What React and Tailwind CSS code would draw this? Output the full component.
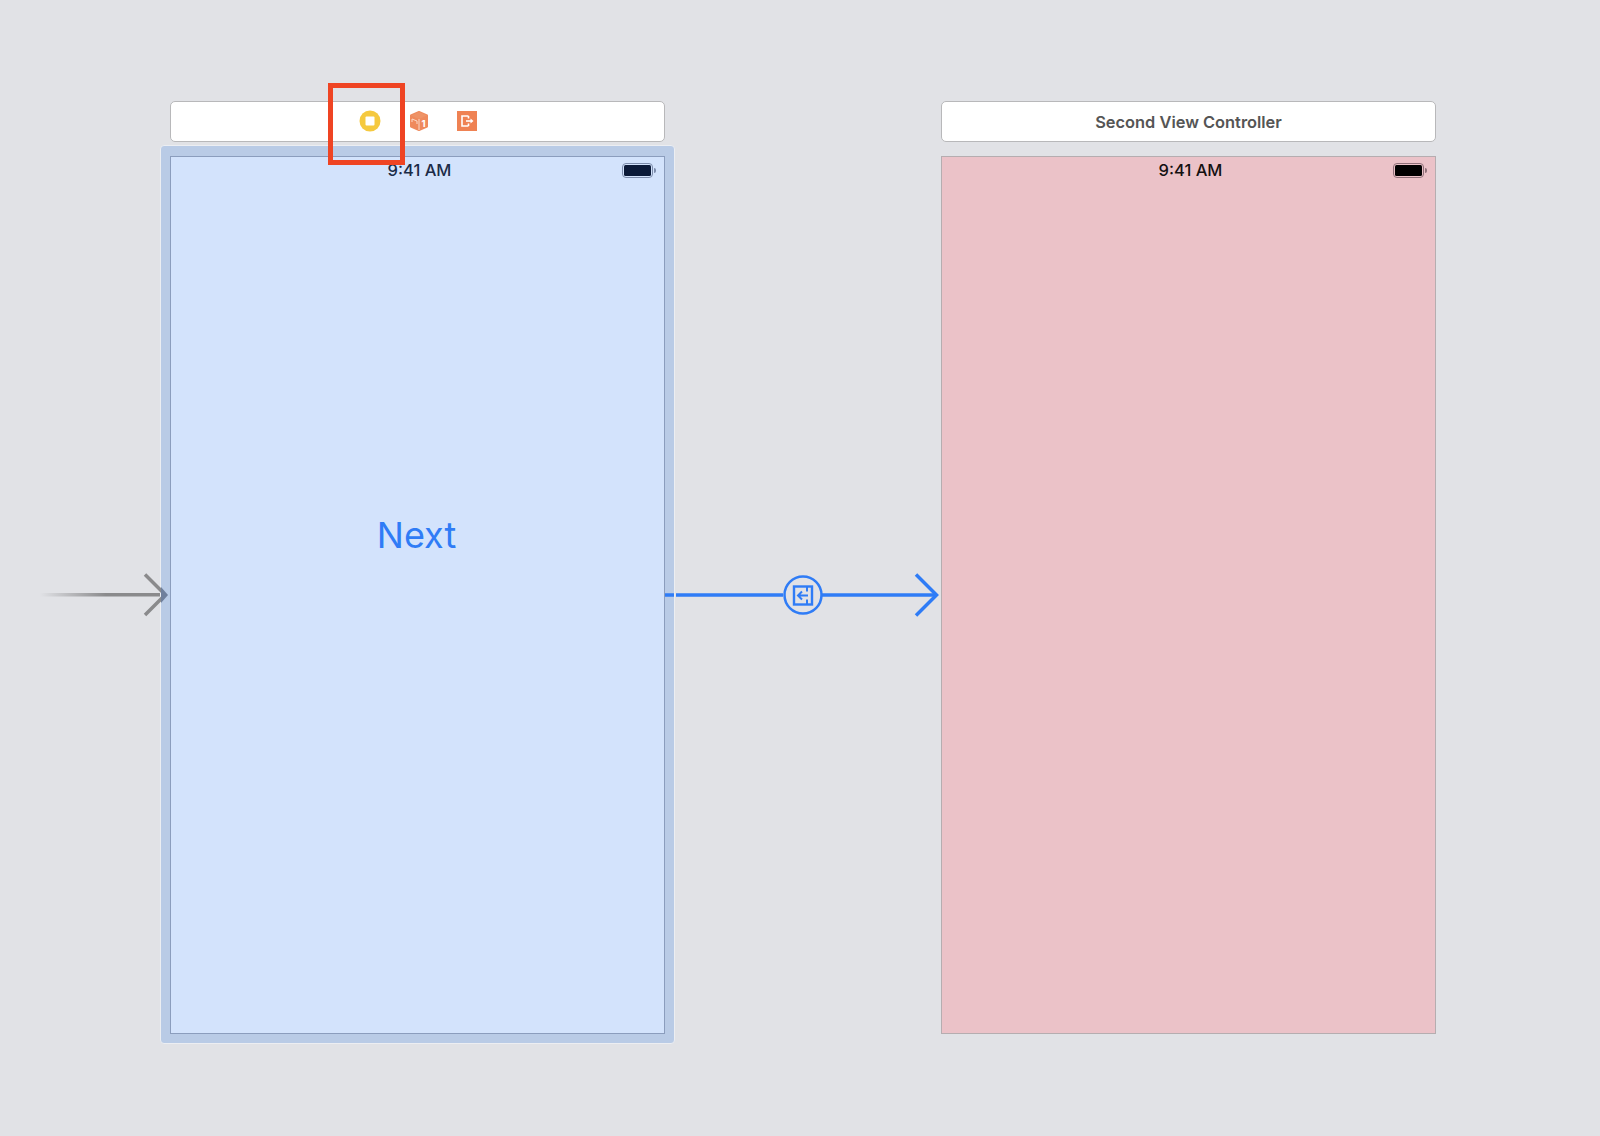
import React from 'react';

const font = { fontFamily: 'Inter, "Liberation Sans", sans-serif' };

function Battery({ dark }) {
  return (
    <div className="flex items-center gap-[1px] mr-[8px]">
      <div className={`w-[31px] h-[15px] rounded-[4px] border-[1.5px] p-[1px] ${dark ? 'border-[#7c8cab]' : 'border-[#8f7079]'}`}>
        <div className={`w-full h-full rounded-[1.5px] ${dark ? 'bg-[#0b1a38]' : 'bg-black'}`} />
      </div>
      <div className={`w-[2px] h-[5px] rounded-r-[2px] ${dark ? 'bg-[#7c8cab]' : 'bg-[#8f7079]'}`} />
    </div>
  );
}

function StatusBar({ dark }) {
  return (
    <div className="grid grid-cols-[1fr_auto_1fr] items-center h-[27px]">
      <div />
      <span className={`ml-[4px] text-[16.5px] font-medium ${dark ? 'text-[#1b2b47]' : 'text-[#141011]'}`}>9:41 AM</span>
      <div className="justify-self-end">
        <Battery dark={dark} />
      </div>
    </div>
  );
}

function SceneIcons() {
  return (
    <div className="flex items-center justify-center h-full gap-[28px] pl-[1px] pb-[1px]">
      <svg width="22" height="22" viewBox="0 0 22 22">
        <circle cx="11" cy="11" r="10.5" fill="#f5c93f" />
        <rect x="6.5" y="6.5" width="9" height="9" rx="1" fill="#fff" />
      </svg>
      <svg width="20" height="22" viewBox="0 0 20 22">
        <path d="M10 2 L18 5.5 L18 16.5 L10 20 L2 16.5 L2 5.5 Z" fill="#ef8a5c" stroke="#ef8a5c" strokeWidth="2" strokeLinejoin="round" />
        <path d="M2 5.5 L10 9 L18 5.5 L10 2 Z" fill="#ee9367" />
        <path d="M10 9 L10 20" stroke="#fbd9c8" strokeWidth="1" />
        <path d="M3 9 L8 11 L8 14 M3 9 L3 12" stroke="#fbd9c8" strokeWidth="1" fill="none" />
        <text x="14.5" y="17" fontSize="9.5" fontWeight="700" fill="#fff" textAnchor="middle" fontFamily="Inter, sans-serif">1</text>
      </svg>
      <svg width="20" height="20" viewBox="0 0 20 20">
        <rect width="20" height="20" fill="#ef8253" />
        <path d="M11.5 5 H5 V15 H11.5 M11.5 5 V7.5 M11.5 15 V12.5" stroke="#fff" strokeWidth="1.6" fill="none" />
        <path d="M9 10 H14" stroke="#fff" strokeWidth="1.6" />
        <path d="M13.5 7.5 L16.5 10 L13.5 12.5 Z" fill="#fff" />
      </svg>
    </div>
  );
}

function Arrows() {
  return (
    <svg className="absolute left-0 top-0" width="1600" height="1136" viewBox="0 0 1600 1136">
      <defs>
        <linearGradient id="fade" x1="40" x2="160" y1="0" y2="0" gradientUnits="userSpaceOnUse">
          <stop offset="0" stopColor="#8a8a8c" stopOpacity="0" />
          <stop offset="0.55" stopColor="#8a8a8c" />
          <stop offset="1" stopColor="#8a8a8c" />
        </linearGradient>
      </defs>
      {/* initial scene arrow */}
      <rect x="40" y="593" width="120" height="3.5" fill="url(#fade)" />
      <path d="M145 574.5 L163 592.5 M163 597 L145 615" stroke="#8a8a8c" strokeWidth="3.5" fill="none" />
      <path d="M161 587 L168 595 L161 603 Z" fill="#6f7f9c" />

      {/* segue */}
      <path d="M665 595 H674 M676 595 H783" stroke="#2f7cf6" strokeWidth="3.5" />
      <path d="M822 595 H936" stroke="#2f7cf6" strokeWidth="3.5" />
      <path d="M916 574.5 L936.5 595 L916 615.5" stroke="#2f7cf6" strokeWidth="3.5" fill="none" />
      <circle cx="803" cy="595" r="18.5" fill="#e1e2e6" stroke="#2f7cf6" strokeWidth="2.5" />
      <rect x="794" y="586.5" width="18" height="18" fill="none" stroke="#2f7cf6" strokeWidth="2.4" />
      <path d="M807 586.5 V591.5 M807 599.5 V604.5" stroke="#2f7cf6" strokeWidth="2" />
      <path d="M808 595.5 H798 M802 591.5 L798 595.5 L802 599.5" stroke="#2f7cf6" strokeWidth="2" fill="none" />
    </svg>
  );
}

export default function App() {
  return (
    <div className="relative flex items-start w-[1600px] h-[1136px] bg-[#e1e2e6] overflow-hidden" style={font}>
      <div className="w-[495px] ml-[170px] mt-[101px]">
        <div className="h-[41px] bg-white border-[1.5px] border-[#b8b8ba] rounded-[5px]">
          <SceneIcons />
        </div>
        <div className="mt-[3px] -mx-[10px] px-[9px] pt-[10px] pb-[9px] bg-[#b9cbe6] border border-[#eceef2] rounded-[4px]">
          <div className="h-[878px] bg-[#d3e3fc] border border-[#8b9dbd]">
            <StatusBar dark />
            <div className="mt-[333px] pr-[2px] text-center text-[36px] leading-none text-[#2f7cf6]">Next</div>
          </div>
        </div>
      </div>

      <div className="w-[495px] ml-[276px] mt-[101px]">
        <div className="h-[41px] pt-[1px] flex items-center justify-center bg-white border-[1.5px] border-[#b8b8ba] rounded-[5px] text-[16.4px] font-semibold text-[#555555]">
          Second View Controller
        </div>
        <div className="mt-[14px] h-[878px] bg-[#ebc2c8] border border-[#b5adb0]">
          <StatusBar />
        </div>
      </div>

      <Arrows />

      {/* annotation box */}
      <div className="absolute left-[328px] top-[83px] w-[77px] h-[82px] border-[5px] border-[#ef4423]" />
    </div>
  );
}
